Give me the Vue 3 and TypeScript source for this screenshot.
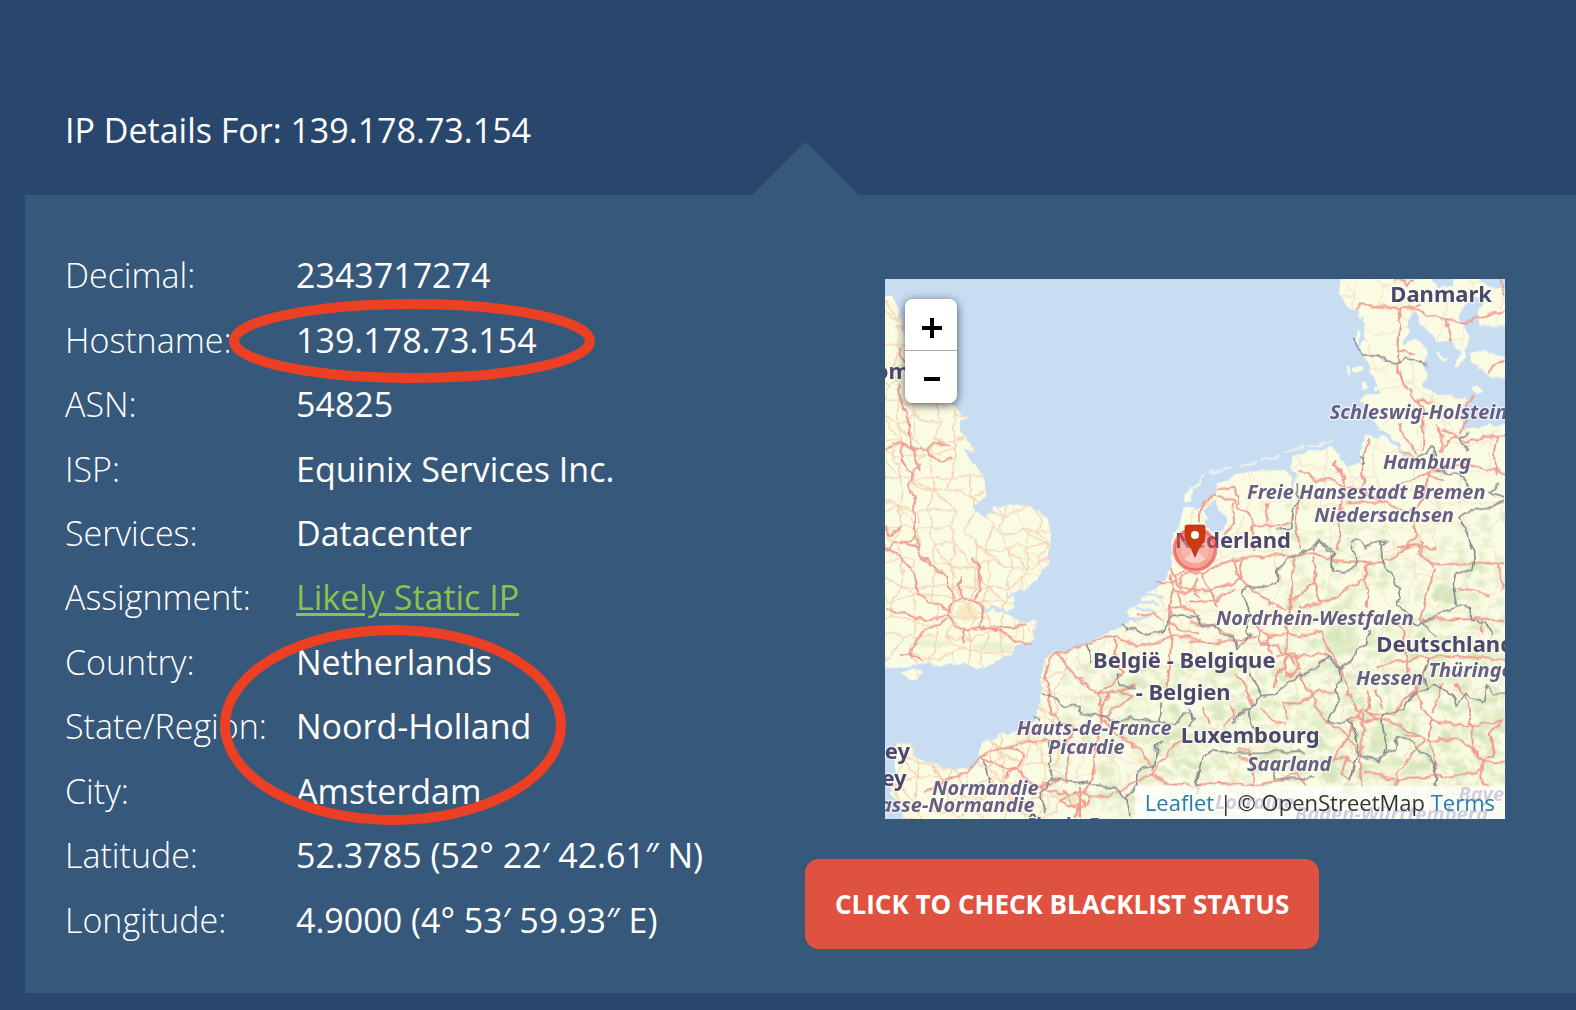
<script setup lang="ts">
interface Detail {
  label: string
  value: string
  href?: string
}

interface MapLabel {
  text: string
  x: number
  y: number
  kind: 'country' | 'region'
  anchor?: 'start' | 'end'
}

const ip = '139.178.73.154'

const details: Detail[] = [
  { label: 'Decimal:', value: '2343717274' },
  { label: 'Hostname:', value: ip },
  { label: 'ASN:', value: '54825' },
  { label: 'ISP:', value: 'Equinix Services Inc.' },
  { label: 'Services:', value: 'Datacenter' },
  { label: 'Assignment:', value: 'Likely Static IP', href: '#static-ip' },
  { label: 'Country:', value: 'Netherlands' },
  { label: 'State/Region:', value: 'Noord-Holland' },
  { label: 'City:', value: 'Amsterdam' },
  { label: 'Latitude:', value: '52.3785 (52° 22′ 42.61″ N)' },
  { label: 'Longitude:', value: '4.9000 (4° 53′ 59.93″ E)' },
]

const mapLabels: MapLabel[] = [
  { text: 'Danmark', x: 1531, y: 96, kind: 'country' },
  { text: 'Schleswig-Holstein', x: 1349, y: 447, kind: 'region' },
  { text: 'Hamburg', x: 1509, y: 597, kind: 'region' },
  { text: 'Freie Hansestadt Bremen', x: 1101, y: 687, kind: 'region' },
  { text: 'Niedersachsen', x: 1303, y: 756, kind: 'region' },
  { text: 'Nederland', x: 885, y: 834, kind: 'country' },
  { text: 'België - Belgique', x: 639, y: 1195, kind: 'country' },
  { text: '- Belgien', x: 767, y: 1291, kind: 'country' },
  { text: 'Nordrhein-Westfalen', x: 1008, y: 1066, kind: 'region' },
  { text: 'Deutschland', x: 1489, y: 1146, kind: 'country' },
  { text: 'Hessen', x: 1428, y: 1244, kind: 'region' },
  { text: 'Thüringen', x: 1645, y: 1221, kind: 'region' },
  { text: 'Luxembourg', x: 902, y: 1419, kind: 'country' },
  { text: 'Saarland', x: 1101, y: 1502, kind: 'region' },
  { text: 'Hauts-de-France', x: 410, y: 1396, kind: 'region' },
  { text: 'Picardie', x: 504, y: 1452, kind: 'region' },
  { text: 'Normandie', x: 157, y: 1574, kind: 'region' },
  { text: 'Basse-Normandie', x: 464, y: 1626, kind: 'region', anchor: 'end' },
  { text: 'Guernsey', x: 90, y: 1468, kind: 'country', anchor: 'end' },
  { text: 'Jersey', x: 80, y: 1548, kind: 'country', anchor: 'end' },
  { text: 'United Kingdom', x: 90, y: 328, kind: 'country', anchor: 'end' },
  { text: 'Lorraine', x: 1005, y: 1618, kind: 'region' },
  { text: 'Bayern', x: 1735, y: 1592, kind: 'region' },
  { text: 'Baden-Württemberg', x: 1245, y: 1654, kind: 'region' },
  { text: 'Île-de-France', x: 440, y: 1686, kind: 'region' },
]

const britain =
  'M15 70L40 85 55 120 68 170 80 210 95 260 130 320 180 380 225 410 245 430 262 440 240 452 243 480 262 510 280 530 290 553 270 548 248 535 262 560 290 585 310 620 322 660 310 685 285 705 280 720 305 733 325 740 338 725 342 708 375 705 410 702 450 708 480 725 505 755 513 790 510 840 500 880 480 920 450 950 430 965 405 970 400 995 405 1010 370 1030 385 1040 410 1050 440 1055 468 1055 465 1085 460 1110 430 1125 405 1135 395 1155 360 1165 330 1180 310 1195 285 1190 250 1178 210 1180 170 1185 130 1183 90 1188 60 1190 0 1200V70ZM60 1210L90 1194 125 1200 130 1205 105 1230 85 1222Z'

const continent =
  'M50 1422L90 1420 105 1445 115 1465 150 1480 200 1495 250 1500 290 1490 300 1465 290 1450 310 1420 350 1400 410 1380 460 1355 480 1310 490 1270 485 1210 490 1170 520 1145 560 1145 620 1120 680 1090 730 1065 765 1045 740 1025 775 1000 785 975 830 950 860 920 875 880 880 810 900 760 915 710 930 712 945 722 962 705 1010 670 1010 645 1060 620 1120 605 1180 600 1215 600 1235 620 1252 625 1230 590 1240 560 1290 545 1350 535 1380 550 1385 570 1400 590 1440 575 1440 540 1455 500 1470 495 1500 500 1530 510 1560 545 1565 540 1540 505 1500 480 1480 455 1485 440 1470 420 1440 390 1460 375 1500 370 1490 330 1465 290 1445 250 1450 200 1445 160 1430 120 1390 100 1378 60 1385 10H1895V1667H75L60 1600 30 1570 50 1500 40 1450Z'

const roadsNorthWest =
  'M50 345L65 400 85 450 90 510 100 540 110 575 125 605M15 545L40 525 65 522 95 535 140 540 155 528 180 520 212 525M140 540L145 560 190 572 215 565M65 522L65 570 80 600 95 605 125 585M95 605L90 650 102 690 105 750 105 780 115 840M15 770L30 800 60 770M25 840L40 815 70 820 105 800M60 230L62 260 75 275'

const roadsNorthEast =
  'M500 120L505 107 560 105 630 112 690 108M660 110L700 130 765 150 825 158 870 145 910 130 945 125M765 150L790 215M635 110L625 180 620 280 640 340 680 390 700 420 700 540M625 245L650 240 675 250M675 390L725 395M848 382L830 400 830 440 810 490M740 460L755 500 750 545 790 500 830 515 900 500 945 495M630 460L640 490 680 550M755 485L790 490 810 510M920 500L915 560 920 620M610 30L640 30 655 48 670 30M895 310L910 285 945 275M440 570L435 590 460 620 465 680 455 700 450 780 440 840M535 505L520 560 520 640 500 655M320 605L350 610 365 630 430 630 460 650 500 655 570 690 620 650 680 620 710 610 760 630M325 690L320 760 330 840M470 700L570 695 620 710 665 730 700 680 720 610M665 730L680 800 650 830M710 610L780 585 830 580 945 610M30 760L30 710 80 672M80 680L130 690 150 710 170 720 195 770 300 762M80 660L130 650 150 700M235 700L225 760M130 700L132 760 100 790M190 770L190 840M620 835L680 825 740 835M700 590L640 540M930 27L945 80'

const roadsSouthWest =
  'M15 20L60 50 100 100 120 160 160 190 205 205M60 0L100 10 120 45 165 85 200 110 215 150 215 180M15 205L60 215 110 235 150 240 205 225M215 180L250 172 290 180 310 205 305 240 295 262 255 270 220 258 205 225 208 195ZM240 110L240 150 250 175M275 50L300 95 298 150 290 180M165 258L130 280 105 300 95 345 130 365M205 235L165 258M60 345L95 340M295 262L340 262 400 262 440 250M340 262L380 285 410 305 455 315M255 270L250 310M530 340L560 335 640 305 690 285 720 295 770 320 820 310 870 290 930 290 960 300M530 340L510 360 497 400 505 450 510 510 530 530M530 340L560 380 600 420 650 460 720 455 770 430M650 460L665 500 665 540 690 560 740 600 790 640 815 690M665 500L700 450M700 290L710 350 730 400 700 430 650 460M720 455L755 470 700 510 665 540M875 290L870 350 865 420 860 460M300 650L350 630 390 620 440 605 500 600M300 650L340 670 410 685 440 720 470 740 560 765M390 620L430 650 415 685 380 690 375 715M570 620L560 680 560 730M665 540L650 600 645 660 630 740 610 760M510 510L540 540 580 560 560 620M570 770L600 755 620 765 625 790 600 805 575 795ZM545 750L570 770 540 785 560 800 600 790 590 830M600 740L600 830M580 755L620 800M625 770L680 770 740 740 815 700 870 630 910 600M815 700L850 730 960 740M815 690L800 660M130 760L200 720 260 700 300 650M830 125L870 130 890 120M870 100L880 150 870 200 865 240 875 290M880 150L910 160 940 150 960 170M900 110L930 100 960 110M895 160L905 200 940 210 960 250M870 80L890 120 900 150M770 225L820 225 850 240M885 105L910 95M865 240L900 270 960 280M900 110L905 140 930 150 950 120M870 205L910 200M475 740L540 720'

const roadsSouthEast =
  'M0 100L40 105 80 70 130 60 200 50 290 45 370 40 430 60 520 68 600 62 640 30 680 15 690 40 720 70 780 75 860 65 945 70M40 105L60 150 80 200M0 150L60 150 120 130 150 120 160 60M0 185L80 180 130 145M130 60L150 120 190 150 240 190 290 210M370 50L380 100 370 130 390 190M370 130L300 190 290 260M310 45L310 110 300 200 285 260M540 65L520 110 535 150 530 200M520 120L460 150 420 180 330 200M690 0L700 50 735 90 715 150 700 200 690 240M690 240L780 235 860 235 945 240M880 240L870 280M200 270L240 290 290 280 330 290 390 270M220 310L260 320 300 350 410 340M240 290L235 330 250 340M200 250L215 310 240 300M290 260L290 350 270 390 250 440M300 350L330 390 300 410 280 380 290 350M265 345L310 340 330 370 320 400 285 405M330 400L340 440 370 460 390 455 440 455M390 270L400 300 430 350 460 400 470 450 500 510 520 520M370 460L380 500 400 540 430 560 480 590M280 490L290 540M215 500L240 540 285 555M280 490L330 490 370 460M470 540L500 530 520 510 545 520 610 525 640 480 680 450 720 350M520 520L515 600 510 680 515 740M500 530L520 545 560 540 530 515M530 450L540 480 530 520M560 455L580 500M580 540L640 560 690 590M530 540L580 540M640 580L720 600 800 595 840 620 880 670 945 665M720 600L730 650 740 720M700 600L650 660 620 700 615 740M520 690L610 720 740 710 860 700 880 670M720 540L780 550 840 560 945 540M840 550L850 620 880 670M650 360L670 430 700 500 720 540 720 600M800 430L840 500 840 550M755 430L730 520M880 670L870 710 890 740M945 540L900 580 910 640 880 670M0 740L90 730 200 735 280 720M140 630L180 630 180 660 145 650M180 660L190 740M130 400L160 430 190 500M40 500L60 550M120 500L135 530 100 560M480 590L440 640 430 660 470 650 495 680 480 720 455 700 470 650M490 540L475 590 500 640 525 620M560 380L650 360 700 350 820 350 945 360M930 70L935 150M800 145L850 150 900 165M0 250L70 255 130 290M0 300L60 310 140 300 200 290M270 720L320 700 350 740M610 240L640 275 650 360'

const bordersNorth =
  'M490 208L515 255 560 255 600 275 630 275 655 265 680 275 712 285M325 640L325 700 310 720 305 775 260 780M835 485L810 510 840 545M680 560L720 545 730 530 740 560M740 600L800 610 810 620 840 650M945 690L900 715 850 720 810 740 830 790 845 840M895 670L945 680M930 640L900 670M370 840L385 815 430 835M480 825L500 810 530 830 570 810 590 815 570 840M510 560h12v20h-12'

const bordersSouthWest =
  'M730 250L735 275 770 265 800 285 850 270 870 230 910 225 930 240 960 230M617 315L630 345 630 370M715 400L720 435 770 440M490 465L530 475 550 500 600 500 600 520 670 530 690 545 760 535 840 545 840 490M840 545L890 555 910 520 935 520 930 560M850 600L830 620 825 675 775 690 770 740 740 780 700 740 640 735 590 725 510 715 515 690 505 600M740 780L755 830M310 660L330 730M510 715L500 740 480 760 495 820M460 530L480 545M960 690L950 710 950 760'

const bordersSouthEast =
  'M0 230L20 235 35 260 75 255 95 280 135 295 140 325 180 285 170 270 180 210 155 160 165 145 210 145 265 125 260 95 300 50 340 35 385 10 430 35 430 95 470 95 500 75 495 40 480 20M575 0L580 70 610 110 630 160 620 200 660 220 680 260 720 235 800 200 790 140 800 100 845 90 855 40 840 0M800 200L840 205 850 240 890 250 905 285M690 245L740 290M535 270L530 310 500 330 490 360 450 385 410 345 400 370 340 405 270 440 260 465 215 470 185 400M450 385L455 420 435 450 450 480 410 540 430 550 480 540 500 590 505 640M215 470L180 510 180 550 200 580M180 510L150 515 130 555M580 640L590 620 575 540 580 520 640 510 670 460 710 445 735 430 780 460 800 495 830 465 880 485 890 440 910 460 945 460M710 445L700 400 720 350M505 640L560 665 590 635 620 630 625 590 660 600 700 640 730 670 740 735M20 730L40 650 70 630 140 640 210 640M210 640L330 630 350 640M240 680L260 715 330 720 370 710M505 640L480 720M0 500L10 540'

// Small repeatable generator: keeps the side-road mesh identical on every load.
function createRandom(seed: number): () => number {
  let state = seed
  return () => {
    state = (state * 16807) % 2147483647
    return state / 2147483647
  }
}

function buildMesh(left: number, right: number, step: number, seed: number): string {
  const random = createRandom(seed)
  const rows: [number, number][][] = []
  for (let y = 20; y < 1690; y += step) {
    const row: [number, number][] = []
    for (let x = left; x <= right; x += step) {
      row.push([
        Math.round(x + (random() - 0.5) * step * 0.8),
        Math.round(y + (random() - 0.5) * step * 0.8),
      ])
    }
    rows.push(row)
  }
  let path = ''
  rows.forEach((row, r) =>
    row.forEach(([x, y], c) => {
      const links: [[number, number] | undefined, number][] = [
        [row[c + 1], 0.15],
        [rows[r + 1]?.[c], 0.15],
        [rows[r + 1]?.[c + 1], 0.7],
      ]
      for (const [next, skip] of links) {
        if (!next || random() < skip) continue
        const bendX = Math.round((x + next[0]) / 2 + (random() - 0.5) * 26)
        const bendY = Math.round((y + next[1]) / 2 + (random() - 0.5) * 26)
        path += `M${x} ${y}Q${bendX} ${bendY} ${next[0]} ${next[1]}`
      }
    }),
  )
  return path
}

function buildWoods(): { x: number; y: number; rx: number; ry: number; o: number }[] {
  const random = createRandom(4177)
  return Array.from({ length: 1300 }, () => {
    const x = 480 + Math.pow(random(), 0.6) * 1395
    const y = x < 1200 ? 1180 + random() * 460 : 640 + Math.pow(random(), 0.6) * 1000
    return {
      x: Math.round(x),
      y: Math.round(y),
      rx: Math.round(5 + random() * 17),
      ry: Math.round(4 + random() * 11),
      o: 0.2 + random() * 0.4,
    }
  })
}

const britishLanes = buildMesh(0, 540, 54, 911)
const continentalLanes = buildMesh(420, 1900, 84, 353)
const woods = buildWoods()
</script>

<template>
  <main class="page">
    <header class="page-header">
      <h1>IP Details For: {{ ip }}</h1>
    </header>

    <section class="panel">
      <div class="details">
        <table>
          <tbody>
            <tr v-for="item in details" :key="item.label">
              <th scope="row">{{ item.label }}</th>
              <td>
                <a v-if="item.href" :href="item.href">{{ item.value }}</a>
                <template v-else>{{ item.value }}</template>
              </td>
            </tr>
          </tbody>
        </table>
      </div>

      <div class="location">
        <div class="map">
          <svg class="tiles" viewBox="15 27 1860 1620" preserveAspectRatio="xMidYMid slice" role="img" aria-label="Map of the Netherlands">
            <defs>
              <clipPath id="land"><path :d="britain" /><path :d="continent" /></clipPath>
              <filter id="soft" x="-5%" y="-5%" width="110%" height="110%"><feGaussianBlur stdDeviation="3" /></filter>
              <filter id="terrain" filterUnits="userSpaceOnUse" x="-20" y="-10" width="1930" height="1700" color-interpolation-filters="sRGB">
                <feTurbulence type="fractalNoise" baseFrequency="0.03" numOctaves="2" seed="7" result="noise" />
                <feDisplacementMap in="SourceGraphic" in2="noise" scale="24" xChannelSelector="R" yChannelSelector="G" />
                <feGaussianBlur stdDeviation="1" />
              </filter>
            </defs>
            <rect x="15" y="27" width="1860" height="1620" fill="#c8ddf2" />

            <g filter="url(#terrain)">
              <path :d="britain" class="land" />
              <path :d="continent" class="land" />

              <g clip-path="url(#land)">
                <g fill="#cfe3b4" filter="url(#soft)">
                  <ellipse v-for="(w, i) in woods" :key="i" :cx="w.x" :cy="w.y" :rx="w.rx" :ry="w.ry" :opacity="w.o" />
                  <ellipse cx="150" cy="1120" rx="60" ry="14" opacity=".4" />
                  <ellipse cx="340" cy="1130" rx="60" ry="16" opacity=".4" />
                  <ellipse cx="1380" cy="1110" rx="60" ry="50" opacity=".5" />
                  <ellipse cx="1700" cy="970" rx="40" ry="30" opacity=".7" />
                  <ellipse cx="1350" cy="1500" rx="26" ry="44" opacity=".7" />
                  <ellipse cx="1500" cy="1410" rx="26" ry="44" opacity=".6" />
                </g>
                <path :d="britishLanes" class="lane" />
                <path :d="continentalLanes" class="lane faint" />
              </g>

              <g transform="translate(930 0)">
                <g fill="#c8ddf2">
                  <path d="M675 120L655 150 650 200 640 225 680 212 710 235 714 260 695 280 712 310 700 345 735 370 780 378 815 385 835 400 815 440 815 470 860 480 900 462 965 465V165L870 170 860 130 880 100 860 80 835 95 808 130 820 160 838 200 820 240 800 240 790 215 750 215 715 190 690 160Z" />
                  <path d="M700 10H800L790 45 740 50ZM850 10H965V45L900 55Z" />
                  <path d="M35 718L80 690 85 720 110 740 105 775 75 790 45 770 55 745Z" />
                  <path d="M500 150L520 140 522 200 508 235 500 220Z" />
                </g>
                <g class="land">
                  <path d="M845 250L880 240 965 262V325L900 320 860 290 845 280Z" />
                  <path d="M832 195L838 205 812 290 800 292 805 255ZM740 245L775 268 765 272 742 255ZM648 222L680 212 706 240 710 262 685 255 655 248Z" />
                  <path d="M848 350L868 345 884 362 865 374 850 365Z" />
                  <circle cx="503" cy="297" r="11" /><circle cx="521" cy="346" r="9" /><circle cx="556" cy="350" r="8" />
                  <path d="M502 180L512 182 508 230 500 215ZM470 285L482 290 480 320 474 310Z" />
                </g>
                <path d="M0 660L45 612M60 606L130 590M145 586L200 575M215 572L270 558M285 548L345 530M358 528L430 518" class="sandbank" />
              </g>
              <path d="M920 670L935 655 942 668 932 695 918 692ZM940 645L960 628 962 635 945 652Z" class="land" />
              <path d="M775 970L850 985M770 990L840 1005M765 1010L830 1030M755 1055L810 1040M370 1025L340 1012 300 1030M430 965L380 975M1560 540L1590 570 1620 590M1240 620V655" class="estuary" />

              <path :d="roadsNorthWest" class="road" />
              <path :d="roadsNorthEast" class="road" transform="translate(930 0)" />
              <path :d="roadsSouthWest" class="road" transform="translate(0 810)" />
              <path :d="roadsSouthEast" class="road" transform="translate(930 810)" />

              <path :d="bordersNorth" class="border" transform="translate(930 0)" />
              <path :d="bordersSouthWest" class="border" transform="translate(0 810)" />
              <path :d="bordersSouthEast" class="border" transform="translate(930 810)" />
              <ellipse cx="262" cy="1030" rx="34" ry="24" fill="#f5d8a8" opacity=".5" filter="url(#soft)" />
            </g>

            <text
              v-for="label in mapLabels"
              :key="label.text"
              :x="label.x"
              :y="label.y"
              :class="label.kind"
              :text-anchor="label.anchor ?? 'start'"
            >{{ label.text }}</text>

            <circle cx="945" cy="838" r="62" fill="#f0504c" fill-opacity=".5" stroke="#ee4444" stroke-opacity=".6" stroke-width="10" />
            <circle cx="945" cy="838" r="42" fill="#ffd9d6" opacity=".3" />
            <path d="M945 838L914 866A42 42 0 0 0 976 866Z" fill="#fff" opacity=".35" />
            <path d="M921 765H969Q975 765 975 771V800Q973 818 958 832L945 862 932 832Q917 818 915 800V771Q915 765 921 765Z" fill="#cb3a12" stroke="#a92f10" stroke-width="2" />
            <circle cx="945" cy="795" r="12" fill="#fff" />
          </svg>

          <div class="zoom">
            <button type="button" aria-label="Zoom in">
              <svg viewBox="0 0 52 52"><path d="M17 29H37M27 19V39" /></svg>
            </button>
            <button type="button" aria-label="Zoom out">
              <svg viewBox="0 0 52 52"><path d="M19 28H35" /></svg>
            </button>
          </div>

          <p class="attribution"><a href="#leaflet">Leaflet</a> | © OpenStreetMap <a href="#terms">Terms</a></p>
        </div>

        <button type="button" class="blacklist">CLICK TO CHECK BLACKLIST STATUS</button>
      </div>

      <svg class="rings" viewBox="0 0 620 798" aria-hidden="true">
        <ellipse cx="387" cy="146" rx="178" ry="37" />
        <ellipse cx="368" cy="530" rx="168" ry="95" />
      </svg>
    </section>
  </main>
</template>

<style>
body {
  margin: 0;
  background: #29476c;
}
</style>

<style scoped>
.page {
  box-sizing: border-box;
  min-height: 100vh;
  padding: 0 0 17px 25px;
  background: #29476c;
  color: #fff;
  font-family: "Open Sans", "Noto Sans", sans-serif;
}

.page-header {
  padding: 105px 40px 40px;
}

h1 {
  margin: 0;
  font-size: 34px;
  font-weight: 400;
  line-height: 50px;
}

.panel {
  position: relative;
  display: flex;
  background: #36587a;
}

.panel::before {
  content: "";
  position: absolute;
  left: calc(50% - 48px);
  bottom: 100%;
  width: 106px;
  height: 53px;
  background: #36587a;
  clip-path: polygon(50% 0, 100% 100%, 0 100%);
}

.details {
  flex: 0 0 740px;
  padding: 48px 0 41px 40px;
}

table {
  height: 709px;
  border-collapse: collapse;
  font-size: 34px;
  line-height: 46px;
}

th,
td {
  padding: 0;
  text-align: left;
  white-space: nowrap;
}

th {
  width: 231px;
  font-weight: 300;
}

td {
  font-weight: 500;
}

td a {
  color: #8cc152;
  font-weight: 400;
  text-decoration-thickness: 3px;
  text-underline-offset: 3px;
}

.location {
  flex: 1;
  min-width: 0;
  padding: 84px 71px 44px 0;
}

.map {
  position: relative;
  height: 540px;
  margin-left: 80px;
  overflow: hidden;
  background: #c8ddf2;
}

.tiles {
  display: block;
  width: 100%;
  height: 100%;
}

.land {
  fill: #f9fbe3;
}

.lane {
  fill: none;
  stroke: #f6d3b4;
  stroke-width: 4;
}

.lane.faint {
  stroke: #f4e2c8;
  stroke-width: 3;
}

.road {
  fill: none;
  stroke: #f09c90;
  stroke-width: 6;
  stroke-linejoin: round;
}

.border {
  fill: none;
  stroke: #8b8c8e;
  stroke-width: 5;
  stroke-linejoin: round;
}

.estuary {
  fill: none;
  stroke: #c8ddf2;
  stroke-width: 7;
}

.sandbank {
  fill: none;
  stroke: #e6f0ec;
  stroke-width: 8;
}

.country,
.region {
  font-family: "Noto Sans", "Open Sans", sans-serif;
  font-weight: 700;
  paint-order: stroke;
  stroke: rgba(255, 255, 255, 0.6);
  stroke-width: 8px;
  stroke-linejoin: round;
}

.country {
  fill: #4d476c;
  font-size: 66px;
}

.region {
  fill: #665f82;
  font-size: 60px;
  font-style: italic;
}

.zoom {
  position: absolute;
  top: 20px;
  left: 20px;
  width: 52px;
  overflow: hidden;
  border-radius: 8px;
  box-shadow: 0 2px 10px rgba(0, 0, 0, 0.65);
}

.zoom button {
  display: block;
  box-sizing: border-box;
  width: 52px;
  height: 52px;
  padding: 0;
  border: 0;
  background: #fff;
  cursor: pointer;
}

.zoom button:first-child {
  border-bottom: 1px solid #aaa;
}

.zoom svg {
  display: block;
  width: 52px;
  height: 52px;
  fill: none;
  stroke: #000;
  stroke-width: 4;
}

.attribution {
  position: absolute;
  right: 0;
  bottom: 0;
  margin: 0;
  padding: 0 10px;
  background: rgba(255, 255, 255, 0.7);
  color: #333;
  font-size: 22px;
  line-height: 33px;
  white-space: nowrap;
}

.attribution a {
  color: #2a7bb0;
  text-decoration: none;
}

.blacklist {
  display: block;
  height: 90px;
  margin-top: 40px;
  padding: 0 30px;
  border: 0;
  border-radius: 14px;
  background: #de523f;
  color: #fff;
  font-family: inherit;
  font-size: 26px;
  font-weight: 700;
  cursor: pointer;
}

.rings {
  position: absolute;
  top: 0;
  left: 0;
  width: 620px;
  height: 798px;
  fill: none;
  stroke: #ec4024;
  stroke-width: 10;
  pointer-events: none;
}
</style>
